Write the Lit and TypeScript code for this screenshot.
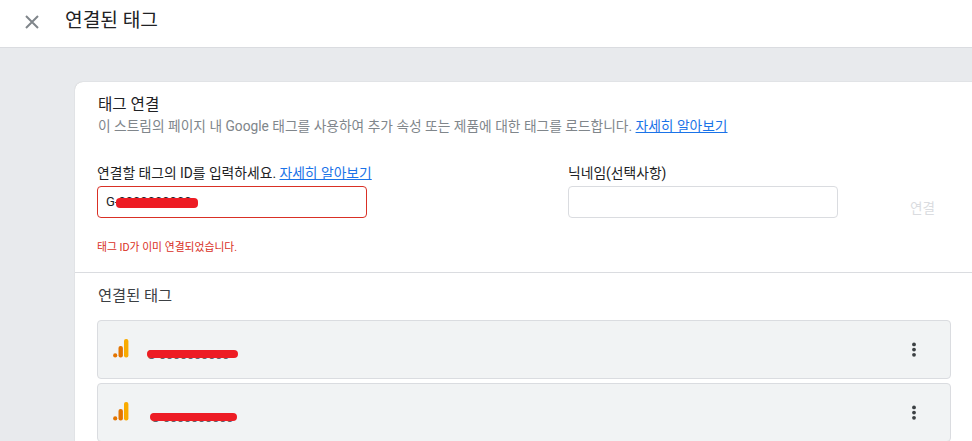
import { LitElement, html, css } from "lit";
import { customElement } from "lit/decorators.js";

const analytics = html`<svg class="ga" width="16" height="19" viewBox="0 0 16 19">
  <rect x="11" y="0" width="4.4" height="18.5" rx="2" fill="#f9ab00"></rect>
  <rect x="5.5" y="7" width="4.4" height="11.5" rx="2" fill="#e37400"></rect>
  <circle cx="2.2" cy="16.4" r="2.1" fill="#e37400"></circle>
</svg>`;

const dots = html`<svg class="dots" width="6" height="16" viewBox="0 0 6 16">
  <circle cx="3" cy="2.4" r="1.9" fill="#3c4043"></circle>
  <circle cx="3" cy="7.6" r="1.9" fill="#3c4043"></circle>
  <circle cx="3" cy="12.8" r="1.9" fill="#3c4043"></circle>
</svg>`;

@customElement("app-root")
export class AppRoot extends LitElement {
  static styles = css`
    :host {
      display: block;
      width: 972px;
      height: 441px;
      overflow: hidden;
      background: #e8eaed;
      font-family: Roboto, "Noto Sans CJK KR", sans-serif;
      color: #202124;
    }
    .topbar {
      height: 48px;
      box-sizing: border-box;
      background: #fff;
      border-bottom: 1px solid #dadce0;
      display: flex;
      align-items: flex-start;
    }
    .close {
      margin: 15px 0 0 25px;
      display: block;
    }
    .topbar h1 {
      margin: 9px 0 0 26px;
      font-size: 19.2px;
      line-height: 24px;
      font-weight: 400;
    }
    .main {
      padding: 34px 0 0 75px;
    }
    .card {
      width: 910px;
      background: #fff;
      border-radius: 8px 0 0 0;
      box-shadow: 0 0 1px rgba(60, 64, 67, 0.35);
    }
    .connect {
      padding: 14px 23px 0;
      height: 191px;
      box-sizing: border-box;
      border-bottom: 1px solid #dadce0;
    }
    .connect h2 {
      margin: 0;
      font-size: 15.6px;
      line-height: 19px;
      font-weight: 400;
    }
    .desc {
      margin: 2px 0 0;
      font-size: 13.76px;
      line-height: 19px;
      color: #80868b;
      white-space: nowrap;
    }
    a {
      color: #1a73e8;
      text-decoration: underline;
    }
    .form {
      display: flex;
      margin-top: 28px;
      align-items: flex-start;
    }
    .field-id {
      width: 270px;
      margin-left: -1px;
    }
    .field-nick {
      width: 270px;
      margin-left: 201px;
    }
    label {
      display: block;
      font-size: 13.8px;
      line-height: 18px;
      margin-bottom: 4px;
      white-space: nowrap;
    }
    .input {
      position: relative;
      box-sizing: border-box;
      height: 32px;
      border: 1px solid #dadce0;
      border-radius: 4px;
      padding: 0 8px;
      font-size: 13px;
      line-height: 30px;
    }
    .input.err {
      border-color: #d93025;
    }
    .err-text {
      margin: 23px 0 0;
      font-size: 10.8px;
      line-height: 14px;
      color: #d93025;
      white-space: nowrap;
    }
    .submit {
      margin: 35px 0 0 72px;
      font-size: 13.6px;
      line-height: 18px;
      color: #dadce0;
    }
    .linked {
      padding: 13px 0 0 22px;
    }
    .linked h3 {
      margin: 0 0 14px 1px;
      font-size: 15.3px;
      line-height: 20px;
      font-weight: 400;
      color: #3c4043;
    }
    .row {
      position: relative;
      box-sizing: border-box;
      width: 854px;
      height: 59px;
      margin-bottom: 4px;
      background: #f1f3f4;
      border: 1px solid #dadce0;
      border-radius: 4px;
      display: flex;
      align-items: center;
      padding: 0 33px 0 15px;
      font-size: 12.5px;
      color: #5f6368;
    }
    .ga {
      margin-top: -3px;
    }
    .row .id {
      margin-left: 18px;
      margin-top: 9px;
    }
    .row .id.second {
      margin-left: 22px;
    }
    .row .dots {
      margin-left: auto;
      margin-top: 0;
    }
    .scribble {
      position: absolute;
      display: block;
      background: #ed1c24;
      border-radius: 4px;
      height: 8px;
    }
    .s1 { left: 18px; top: 11px; width: 82px; height: 10px; }
    .s2 { left: 49px; top: 29px; width: 91px; }
    .s3 { left: 52px; top: 29px; width: 87px; }
  `;

  render() {
    return html`
      <div class="topbar">
        <svg class="close" width="14" height="14" viewBox="0 0 14 14">
          <path d="M1 1 L13 13 M13 1 L1 13" stroke="#80868b" stroke-width="2" fill="none"></path>
        </svg>
        <h1>연결된 태그</h1>
      </div>
      <div class="main">
        <div class="card">
          <section class="connect">
            <h2>태그 연결</h2>
            <p class="desc">이 스트림의 페이지 내 Google 태그를 사용하여 추가 속성 또는 제품에 대한 태그를 로드합니다. <a>자세히 알아보기</a></p>
            <div class="form">
              <div class="field-id">
                <label>연결할 태그의 ID를 입력하세요. <a>자세히 알아보기</a></label>
                <div class="input err">G-0000000000<span class="scribble s1"></span></div>
                <p class="err-text">태그 ID가 이미 연결되었습니다.</p>
              </div>
              <div class="field-nick">
                <label>닉네임(선택사항)</label>
                <div class="input"></div>
              </div>
              <div class="submit">연결</div>
            </div>
          </section>
          <section class="linked">
            <h3>연결된 태그</h3>
            <div class="row">${analytics}<span class="id">G-0000000000</span><span class="scribble s2"></span>${dots}</div>
            <div class="row">${analytics}<span class="id second">G-0000000000</span><span class="scribble s3"></span>${dots}</div>
          </section>
        </div>
      </div>
    `;
  }
}
